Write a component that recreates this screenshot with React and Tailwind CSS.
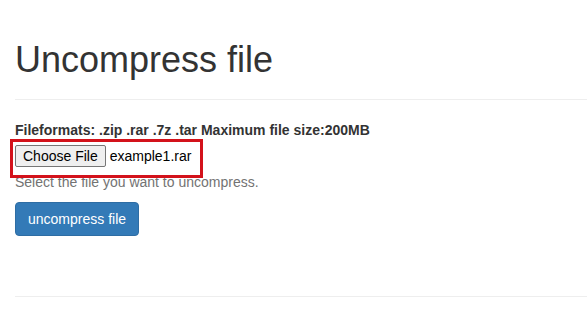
export default function App() {
  return (
    <div
      className="min-h-[313px] bg-white pl-[15px] pt-10 text-[14px] leading-[20px] text-[#333]"
      style={{ fontFamily: '"Liberation Sans", Arial, sans-serif' }}
    >
      {/* page header */}
      <div className="mb-5 border-b border-[#eee] pb-[9px]">
        <h1 className="mb-[10px] text-[36px] font-normal leading-[1.1]">
          Uncompress file
        </h1>
      </div>

      <form className="block">
        <div className="relative">
          <label className="mb-[5px] block font-bold">
            Fileformats: .zip .rar .7z .tar Maximum file size:200MB
          </label>
          <div className="flex h-[22px] items-center gap-1">
            <span className="flex h-[22px] items-center rounded-[2px] border border-[#767676] bg-[#efefef] px-[7px] text-[14px] text-black">
              Choose File
            </span>
            <span className="text-black">example1.rar</span>
          </div>
          <p className="mb-[10px] mt-[5px] text-[#737373]">
            Select the file you want to uncompress.
          </p>

          {/* annotation box */}
          <div className="absolute left-[-5px] top-[19px] h-[39px] w-[193px] border-[3px] border-[#d3121b]" />
        </div>

        <button
          type="button"
          className="h-[34px] rounded-[4px] border border-[#2e6da4] bg-[#337ab7] px-3 text-[14px] text-white"
        >
          uncompress file
        </button>
      </form>

      <div className="mt-[60px] border-t border-[#eee]" />
    </div>
  );
}
